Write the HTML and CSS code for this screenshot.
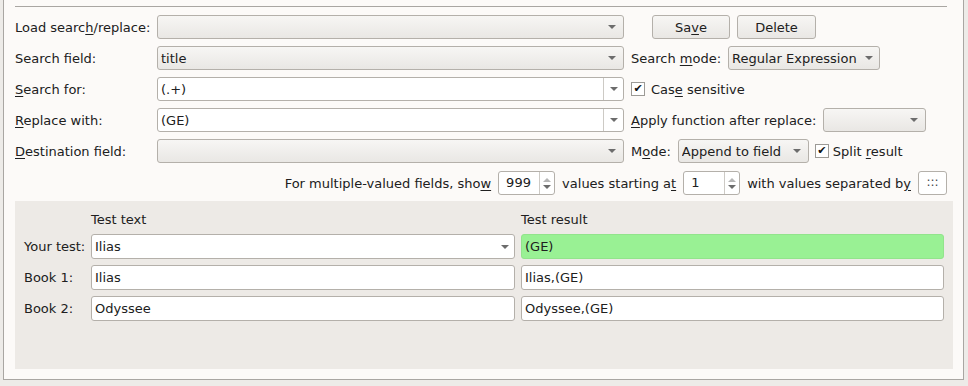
FILE: index.html
```html
<!DOCTYPE html>
<html lang="en">
<head>
    <meta charset="UTF-8">
    <title>Search/replace</title>
    <link rel="stylesheet" href="styles.css">
</head>
<body>
    <div class="frame">
        <div class="sep"></div>

        <div class="form">
            <div class="row">
                <label class="lbl">Load searc<u>h</u>/replace:</label>
                <div class="combo field"><span class="combo-text"></span><span class="arrow"></span></div>
                <button class="btn save">Sa<u>v</u>e</button>
                <button class="btn delete">Delete</button>
            </div>

            <div class="row">
                <label class="lbl">Search field:</label>
                <div class="combo field"><span class="combo-text">title</span><span class="arrow"></span></div>
                <span class="rlbl">Search <u>m</u>ode:</span>
                <div class="combo mode-combo"><span class="combo-text">Regular Expression</span><span class="arrow"></span></div>
            </div>

            <div class="row">
                <label class="lbl"><u>S</u>earch for:</label>
                <div class="combo edit field"><span class="combo-text">(.+)</span><span class="combo-btn"><span class="arrow"></span></span></div>
                <span class="check"><span class="box">&#10004;</span><span>Cas<u>e</u> sensitive</span></span>
            </div>

            <div class="row">
                <label class="lbl"><u>R</u>eplace with:</label>
                <div class="combo edit field"><span class="combo-text">(GE)</span><span class="combo-btn"><span class="arrow"></span></span></div>
                <span class="rlbl"><u>A</u>pply function after replace:</span>
                <div class="combo func-combo"><span class="combo-text"></span><span class="arrow"></span></div>
            </div>

            <div class="row">
                <label class="lbl"><u>D</u>estination field:</label>
                <div class="combo field"><span class="combo-text"></span><span class="arrow"></span></div>
                <span class="rlbl">M<u>o</u>de:</span>
                <div class="combo dest-combo"><span class="combo-text">Append to field</span><span class="arrow"></span></div>
                <span class="check split"><span class="box">&#10004;</span><span>Split <u>r</u>esult</span></span>
            </div>

            <div class="row multi">
                <span>For multiple-valued fields, sho<u>w</u></span>
                <div class="spin"><span class="spin-text">999</span><span class="spin-btns"><span class="up"></span><span class="down"></span></span></div>
                <span>values starting a<u>t</u></span>
                <div class="spin"><span class="spin-text">1</span><span class="spin-btns"><span class="up"></span><span class="down"></span></span></div>
                <span>with values separated b<u>y</u></span>
                <div class="sepbox">:::</div>
            </div>
        </div>

        <div class="test-panel">
            <span></span>
            <span class="head">Test text</span>
            <span class="head">Test result</span>

            <span class="tlbl">Your test:</span>
            <div class="combo edit test-combo"><span class="combo-text">Ilias</span><span class="combo-btn plain"><span class="arrow"></span></span></div>
            <div class="entry ok">(GE)</div>

            <span class="tlbl">Book 1:</span>
            <div class="entry">Ilias</div>
            <div class="entry">Ilias,(GE)</div>

            <span class="tlbl">Book 2:</span>
            <div class="entry">Odyssee</div>
            <div class="entry">Odyssee,(GE)</div>
        </div>
    </div>
</body>
</html>
```

FILE: styles.css
```css
html, body {
    margin: 0;
    padding: 0;
    background-color: #edebe8;
}
body {
    font-family: "DejaVu Sans", "Liberation Sans", sans-serif;
    font-size: 13px;
    color: #202020;
    height: 386px;
    overflow: hidden;
}
u {
    text-decoration-thickness: 1px;
    text-underline-offset: 2px;
}
.frame {
    margin-left: 3px;
    width: 961px;
    height: 380px;
    box-sizing: border-box;
    border: 1px solid #a9a6a2;
    border-top: none;
    background-color: #fcfaf8;
    padding: 6px 9px 0 11px;
}
.sep {
    width: 932px;
    height: 1px;
    background-color: #a9a6a2;
}
.form {
    display: flex;
    flex-direction: column;
    gap: 7px;
    margin-top: 8px;
    width: 932px;
}
.row {
    display: flex;
    align-items: center;
    height: 24px;
    white-space: nowrap;
}
.row.multi {
    margin-top: 1px;
}
.lbl {
    width: 142px;
    flex: none;
}
.field {
    width: 467px;
}
.rlbl {
    margin-left: 7px;
    margin-right: 7px;
}
.combo {
    display: flex;
    align-items: center;
    height: 24px;
    box-sizing: border-box;
    border: 1px solid #b4b0aa;
    border-radius: 3px;
    background: linear-gradient(#f7f6f4, #e9e7e4);
    padding: 0 7px 0 3px;
    flex: none;
}
.combo-text {
    flex: 1;
    min-width: 0;
    overflow: hidden;
}
.arrow {
    flex: none;
    width: 0;
    height: 0;
    border-left: 4px solid transparent;
    border-right: 4px solid transparent;
    border-top: 4px solid #6c6c6c;
    margin-left: 4px;
}
.combo.edit {
    background: #ffffff;
    padding-right: 0;
}
.combo-btn {
    display: flex;
    align-items: center;
    justify-content: center;
    width: 19px;
    height: 100%;
    border-left: 1px solid #cdcac5;
}
.combo-btn .arrow {
    margin-left: 0;
}
.combo-btn.plain {
    border-left: none;
}
.mode-combo {
    width: 152px;
    padding-right: 6px;
}
.func-combo {
    width: 103px;
}
.dest-combo {
    width: 131px;
}
.btn {
    height: 24px;
    box-sizing: border-box;
    border: 1px solid #b4b0aa;
    border-radius: 3px;
    background: linear-gradient(#f7f6f4, #e9e7e4);
    font: inherit;
    color: inherit;
    padding: 0;
}
.save {
    width: 78px;
    margin-left: 28px;
}
.delete {
    width: 79px;
    margin-left: 7px;
}
.check {
    display: flex;
    align-items: center;
    margin-left: 7px;
}
.check.split {
    margin-left: 6px;
}
.box {
    width: 14px;
    height: 14px;
    box-sizing: border-box;
    border: 1px solid #9c9a96;
    background: #ffffff;
    font-size: 11px;
    line-height: 12px;
    text-align: center;
    margin-right: 6px;
    color: #111;
}
.check.split .box {
    margin-right: 4px;
}
.multi {
    justify-content: flex-end;
    gap: 7px;
}
.spin {
    display: flex;
    width: 57px;
    height: 24px;
    box-sizing: border-box;
    border: 1px solid #b4b0aa;
    border-radius: 3px;
    background: #ffffff;
}
.spin-text {
    flex: 1;
    padding-left: 7px;
    line-height: 22px;
}
.spin-btns {
    width: 14px;
    border-left: 1px solid #cdcac5;
    display: flex;
    flex-direction: column;
    align-items: center;
    justify-content: center;
    gap: 3px;
}
.up {
    width: 0;
    height: 0;
    border-left: 4px solid transparent;
    border-right: 4px solid transparent;
    border-bottom: 4px solid #b5b5b5;
}
.down {
    width: 0;
    height: 0;
    border-left: 4px solid transparent;
    border-right: 4px solid transparent;
    border-top: 4px solid #6c6c6c;
}
.sepbox {
    width: 29px;
    height: 24px;
    box-sizing: border-box;
    border: 1px solid #b4b0aa;
    border-radius: 3px;
    background: #ffffff;
    text-align: center;
    line-height: 21px;
    font-size: 12px;
    color: #444;
}
.test-panel {
    margin-top: 6px;
    width: 938px;
    height: 168px;
    box-sizing: border-box;
    background-color: #edeae6;
    padding: 10px 9px 0 9px;
    display: grid;
    grid-template-columns: 61px 424px 423px;
    grid-template-rows: 17px 25px 25px 25px;
    column-gap: 6px;
    row-gap: 6px;
    align-items: center;
}
.tlbl {
    white-space: nowrap;
}
.test-combo {
    height: 25px;
}
.entry {
    height: 25px;
    box-sizing: border-box;
    border: 1px solid #b4b0aa;
    border-radius: 3px;
    background: #ffffff;
    padding-left: 3px;
    line-height: 23px;
}
.entry.ok {
    background: #99f194;
    border-color: #92e48c;
}
```
